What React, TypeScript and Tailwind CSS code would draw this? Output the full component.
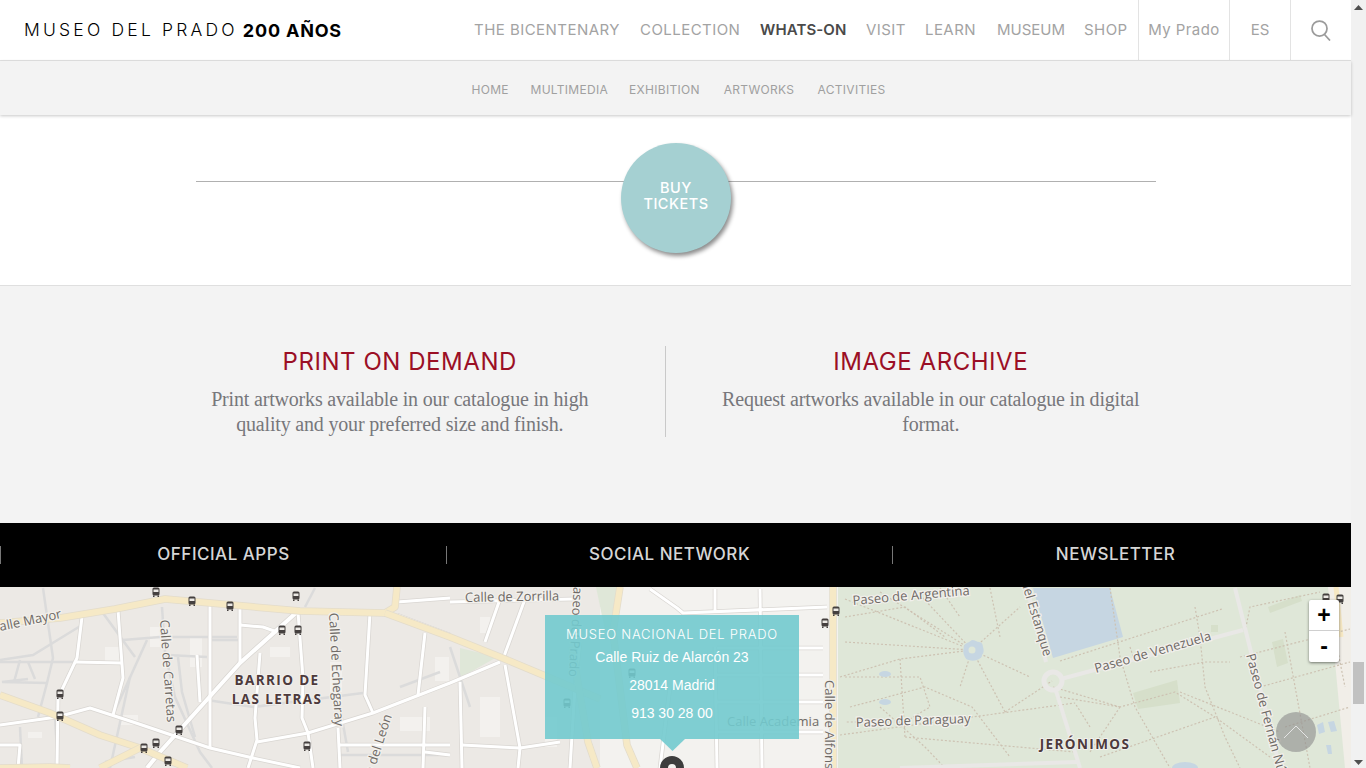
import React from "react";

const majors: number[][] = [
  [0,36,60,31,115,22,165,12,300,24,385,26,395,20,397,0],
  [385,26,450,50,500,70,543,88,600,112],
  [0,108,50,126,100,148,140,161,187,181],
  [140,161,100,181],
  [0,181,50,180,70,181],
  [620,0,613,45,627,158,637,181],
  [572,60,588,155,597,181],
  [833,0,833,181],
];
const whites: number[][] = [
  [82,30,77,71,58,111,57,181],[118,23,123,91,113,128],[75,75,122,76],
  [0,138,57,130,90,121,133,135,210,161,253,171,300,181],[210,15,210,161],[240,18,240,75],
  [240,38,263,40,277,45],[297,25,240,76,160,165,147,181],[298,25,303,91,302,131,308,146,313,181],
  [260,66,255,131,257,153,248,181],[257,155,308,146,373,126,450,96,500,75],[370,26,365,108,373,126],
  [425,46,418,108],[338,141,340,181],[397,28,450,48],[397,15,450,11],[340,158,450,158],[197,68,200,115],
  [450,15,573,12],[500,12,485,55],[525,12,503,72],[505,78,520,161,518,181],[460,95,462,181],[462,158,520,161,560,155],
  [650,2,677,21,683,26,827,20],[715,2,715,25],[760,2,762,181],[717,61,823,61],[717,88,823,88],[717,115,823,115],[717,145,823,145],
  [715,60,717,181],[0,158,20,158,18,181],[425,120,423,181],[425,165,450,168],[580,55,575,100,570,181],[670,100,660,181],
];
const grays: number[][] = [
  [43,1,53,71,47,96,38,130],[0,75,75,75],[28,92,2,95,47,96],[82,38,33,68,0,73],[123,53,160,50,237,50],
  [167,68,207,70],[210,53,240,53],[147,53,113,128],[207,113,253,120,363,106],[340,168,450,168],[162,20,165,65,175,110,200,165,212,181],
  [14,95,20,73],[35,92,28,75],[55,130,58,181],[105,175,135,170],[315,1,305,20],[450,60,470,120],[20,140,22,181],
  [178,70,182,105,195,150],[100,22,135,70],[130,90,110,181],[340,120,348,165],[400,100,440,85],
];
const dots: number[][] = [
  [845,12,972,63],[880,5,972,63],[845,55,972,63,1030,90],[840,90,900,72,972,63],[972,63,960,100],[972,63,1020,20],[920,8,972,63],
  [972,63,1005,125],[840,148,1075,116],[845,30,905,20,945,50],[850,120,925,100,972,120,1010,170],[900,72,905,150],[880,120,925,160,945,181],
  [1060,74,1222,22],[1060,110,1120,120,1175,105,1215,130],[1120,120,1090,165],[1053,100,1120,120],[1110,1,1120,70,1135,120,1170,181],
  [1195,20,1200,50,1205,100,1225,150,1240,181],[1150,85,1205,75,1230,75],[1240,70,1350,42],[1260,100,1350,75],[1285,45,1310,181],
  [1180,105,1280,145],[1100,170,1215,130,1270,170],[1090,140,1075,116],[1285,140,1350,120],[1330,25,1345,100],[905,150,1075,165],[1005,125,1052,94],
  [1245,45,1250,20,1320,5],[1130,60,1135,75],[845,90,920,90,930,120,905,135,845,135],[940,1,960,30],[990,1,1000,50],
];
const buses: number[][] = [
  [192,14],[230,19],[296,9],[282,43],[298,43],[60,107],[60,129],[179,143],[156,156],[144,161],[168,174],[307,159],
  [156,5],[836,24],[825,36],[632,86],[567,116],[1326,11],[1340,12],
];
const pts = (p: number[]) => p.map((v, i) => (i % 2 ? `${v} ` : `${v},`)).join("");

function MapLabel({ t, children, anchor }: { t: string; children: string; anchor?: "end" | "middle" }) {
  return (
    <text transform={t} textAnchor={anchor} fontFamily="'Open Sans',sans-serif" fontSize="13" fill="#6f6a66" stroke="#f2f0ec" strokeWidth="2.5" paintOrder="stroke">
      {children}
    </text>
  );
}
function District({ x, y, children }: { x: number; y: number; children: string }) {
  return (
    <text x={x} y={y} textAnchor="middle" fontFamily="'Open Sans',sans-serif" fontWeight="700" fontSize="13.5" letterSpacing="1.4" fill="#4d3a3c" stroke="#f2f0ec" strokeWidth="2" paintOrder="stroke">
      {children}
    </text>
  );
}

function MapDrawing() {
  return (
    <svg viewBox="0 0 1351 181" width="1351" height="181" className="block">
      <rect width="1351" height="181" fill="#ece9e5" />
      <path d="M600 0H838V181H600Z" fill="#f3f2ef" />
      <path d="M596 0H618L612 45L606 48Z" fill="#dfe7d8" />
      <path d="M460 61L497 70L460 91Z" fill="#dfe7d8" />
      {[[105,60,15,18],[150,40,20,20],[190,50,12,30],[270,60,20,10],[330,75,12,30],[435,70,14,24],[480,110,20,40],[545,130,12,30],[400,130,30,14],[28,145,14,6],[480,30,10,16],[120,128,18,10]].map((r, i) => (
        <rect key={i} x={r[0]} y={r[1]} width={r[2]} height={r[3]} fill="#f3f1ee" />
      ))}
      <path d="M838 0H1345L1351 181H838Z" fill="#dfe7d8" />
      <path d="M1328 0H1351V181H1345Z" fill="#f1eee8" />
      <polyline points="1336,0 1341,50" fill="none" stroke="#f6e8c3" strokeWidth="5" />
      <path d="M1033 1H1110L1123 50L1053 71Z" fill="#c6d6e2" />
      <path d="M1133 106L1177 93L1180 116L1138 122Z" fill="#d6dfca" />
      <path d="M1272 55L1283 52L1288 76L1277 80Z" fill="#d6dfca" />
      <path d="M1268 20L1300 8L1302 14L1270 26Z" fill="#d6dfca" />
      <rect x="1211" y="38" width="7" height="7" fill="#d6dfca" />
      {dots.map((p, i) => (
        <polyline key={i} points={pts(p)} fill="none" stroke="#cdc2b2" strokeWidth="1.2" strokeDasharray="2 2" />
      ))}
      {grays.map((p, i) => (
        <polyline key={i} points={pts(p)} fill="none" stroke="#dbdbdb" strokeWidth="2.5" />
      ))}
      {whites.map((p, i) => (
        <polyline key={`c${i}`} points={pts(p)} fill="none" stroke="#d9d6d2" strokeWidth={i === 7 ? 5.5 : 4.5} strokeLinejoin="round" />
      ))}
      {whites.map((p, i) => (
        <polyline key={i} points={pts(p)} fill="none" stroke="#ffffff" strokeWidth={i === 7 ? 4 : 3} strokeLinejoin="round" />
      ))}
      {majors.map((p, i) => (
        <g key={i}>
          <polyline points={pts(p)} fill="none" stroke="#e3dccb" strokeWidth="7.5" strokeLinejoin="round" />
          <polyline points={pts(p)} fill="none" stroke="#f6e9c6" strokeWidth="6" strokeLinejoin="round" />
        </g>
      ))}
      <g fill="none" stroke="#e9e8e6" strokeWidth="4">
        <polyline points="1027,1 1046,75" />
        <polyline points="1056,104 1080,181" />
        <polyline points="1061,92 1243,43" />
        <polyline points="1235,1 1280,181" />
        <polyline points="900,181 1077,175" />
        <circle cx="1053" cy="94" r="9" strokeWidth="5" />
      </g>
      <path d="M972 53c3 0 5 2 7 2 3 0 4 3 4 5 1 3 1 6-1 8 0 3-3 4-5 5-3 1-6 1-8 0-3 0-4-3-5-5-1-3-1-5 0-8 0-3 3-4 5-5z" fill="#c6d6e2" />
      <circle cx="972" cy="63" r="3.5" fill="#dfe7d8" />
      <ellipse cx="885" cy="87" rx="6" ry="3" fill="#c6d6e2" />
      <ellipse cx="885" cy="115" rx="6" ry="3" fill="#c6d6e2" />
      <path d="M1317 138l6-3 2 10-6 2zM1328 135l6-1 3 10-6 1zM1326 158h5l1 9h-4z" fill="#c6d6e2" />
      <ellipse cx="1185" cy="181" rx="13" ry="6" fill="#c6d6e2" />
      {buses.map((b, i) => (
        <g key={i} transform={`translate(${b[0] - 3.5} ${b[1] - 4.5})`}>
          <rect width="7" height="8" rx="1.5" fill="#45403f" />
          <rect x="1" y="2" width="5" height="2.5" fill="#ece9e5" />
          <rect x="0.5" y="8" width="1.5" height="1.5" fill="#45403f" />
          <rect x="5" y="8" width="1.5" height="1.5" fill="#45403f" />
        </g>
      ))}
      <MapLabel t="translate(62 31) rotate(-12)" anchor="end">Calle Mayor</MapLabel>
      <MapLabel t="translate(160 33) rotate(86)">Calle de Carretas</MapLabel>
      <MapLabel t="translate(329 26) rotate(87)">Calle de Echegaray</MapLabel>
      <MapLabel t="translate(392 129) rotate(-72)" anchor="end">Calle del León</MapLabel>
      <MapLabel t="translate(465 15) rotate(-1)">Calle de Zorrilla</MapLabel>
      <MapLabel t="translate(574 -8) rotate(93)">Paseo del Prado</MapLabel>
      <MapLabel t="translate(727 139)">Calle Academia</MapLabel>
      <MapLabel t="translate(825 93) rotate(90)">Calle de Alfonso XII</MapLabel>
      <MapLabel t="translate(853 18) rotate(-5)">Paseo de Argentina</MapLabel>
      <MapLabel t="translate(856 140) rotate(-2)">Paseo de Paraguay</MapLabel>
      <MapLabel t="translate(1044 70) rotate(73)" anchor="end">Calle del Estanque</MapLabel>
      <MapLabel t="translate(1096 86) rotate(-16)">Paseo de Venezuela</MapLabel>
      <MapLabel t="translate(1246 68) rotate(75)">Paseo de Fernán Núñez</MapLabel>
      <District x={277} y={98}>BARRIO DE</District>
      <District x={277} y={117}>LAS LETRAS</District>
      <District x={1085} y={162}>JERÓNIMOS</District>
    </svg>
  );
}

const nav = [
  ["THE BICENTENARY", "w-[146px]"],
  ["COLLECTION", "w-[100px]"],
  ["WHATS-ON", "w-[86px] font-semibold tracking-[0.1px] text-[#4a4a4a]"],
  ["VISIT", "w-[38px]"],
  ["LEARN", "w-[53px]"],
  ["MUSEUM", "w-[67px] tracking-[0px]"],
  ["SHOP", "w-[43px]"],
];
const sub = [
  ["HOME", "w-[37px]"],
  ["MULTIMEDIA", "w-[76px]"],
  ["EXHIBITION", "w-[72px]"],
  ["ARTWORKS", "w-[73px]"],
  ["ACTIVITIES", "w-[68px]"],
];

export default function App() {
  return (
    <div className="flex h-[768px] w-[1366px] overflow-hidden bg-white font-['Inter',sans-serif]">
      <main className="w-[1351px] shrink-0">
        <header className="flex h-[61px] items-stretch border-b border-[#e3e3e3] bg-white pl-6">
          <div className="flex w-[440px] items-center whitespace-nowrap text-black">
            <span className="text-[17.5px] font-light tracking-[3.2px]">MUSEO DEL PRADO</span>
            <span className="ml-[5px] text-[18px] font-bold tracking-[0.8px]">200 AÑOS</span>
          </div>
          <nav className="ml-[10px] flex w-[664px] items-center gap-[20px] text-[15px] tracking-[0.45px] text-[#a3a3a3]">
            {nav.map(([label, cls]) => (
              <span key={label} className={`whitespace-nowrap text-center ${cls}`}>{label}</span>
            ))}
          </nav>
          <div className="flex w-[91px] items-center justify-center border-l border-[#e3e3e3] text-[15px] tracking-[0.4px] text-[#a3a3a3]">My Prado</div>
          <div className="flex w-[61px] items-center justify-center border-l border-[#e3e3e3] text-[15px] text-[#a3a3a3]">ES</div>
          <div className="flex w-[61px] items-center justify-center border-l border-[#e3e3e3]">
            <svg width="20" height="21" viewBox="0 0 20 21" fill="none" stroke="#9b9b9b" strokeWidth="1.75">
              <circle cx="8.5" cy="8.5" r="7.5" />
              <path d="M13.5 14.5L19 20.5" />
            </svg>
          </div>
        </header>
        <div className="relative z-10 flex h-[54px] items-center justify-center gap-[22px] bg-[#f3f3f3] pl-[6px] pt-[3px] text-[12px] tracking-[0.3px] text-[#a0a0a0] shadow-[0_1px_3px_rgba(0,0,0,0.22)]">
          {sub.map(([label, cls]) => (
            <span key={label} className={`whitespace-nowrap text-center ${cls}`}>{label}</span>
          ))}
        </div>

        <section className="relative h-[171px] border-b border-[#dfdfdf] bg-white pt-[66px]">
          <div className="ml-[196px] h-px w-[960px] bg-[#b0b0b0]" />
          <a className="absolute left-[621px] top-[28px] flex h-[110px] w-[110px] items-center justify-center rounded-full bg-[#a5d0d2] pb-[4px] text-center text-[14.5px] font-medium leading-[16px] tracking-[0.5px] text-white shadow-[2px_3px_4px_rgba(0,0,0,0.45)]">
            BUY<br />TICKETS
          </a>
        </section>

        <section className="h-[237px] bg-[#f3f3f3] pl-[135px] pt-[60px]">
          <div className="grid w-[1061px] grid-cols-2">
            <div className="h-[91px] border-r border-[#c9c9c9] text-center">
              <h2 className="mt-[1px] text-[24px] font-normal leading-[30px] tracking-[0.55px] text-[#9b0f25]">PRINT ON DEMAND</h2>
              <p className="mt-[10px] font-['Liberation_Serif',serif] text-[20px] leading-[25px] tracking-[-0.18px] text-[#77777b]">
                Print artworks available in our catalogue in high<br />quality and your preferred size and finish.
              </p>
            </div>
            <div className="text-center">
              <h2 className="mt-[1px] text-[24px] font-normal leading-[30px] tracking-[0.55px] text-[#9b0f25]">IMAGE ARCHIVE</h2>
              <p className="mt-[10px] font-['Liberation_Serif',serif] text-[20px] leading-[25px] tracking-[-0.18px] text-[#77777b]">
                Request artworks available in our catalogue in digital<br />format.
              </p>
            </div>
          </div>
        </section>

        <section className="grid h-[64px] grid-cols-[446px_446px_459px] items-center bg-black text-[17px] font-medium tracking-[0.5px] text-[#d6d6d6]">
          {["OFFICIAL APPS", "SOCIAL NETWORK", "NEWSLETTER"].map((t, i) => (
            <div key={t} className={`flex h-[18px] items-center justify-center border-l border-[#777] ${i === 2 ? "pr-[13px]" : ""}`}>{t}</div>
          ))}
        </section>

        <section className="relative h-[181px] overflow-hidden">
          <MapDrawing />
          <div className="absolute left-[545px] top-[28px] h-[124px] w-[254px] bg-[#72cace]/90 pt-[10px] text-center text-white">
            <div className="text-[13px] font-light leading-[18px] tracking-[0.75px]">MUSEO NACIONAL DEL PRADO</div>
            <div className="font-['Liberation_Sans',sans-serif] text-[14px] leading-[28px]">
              Calle Ruiz de Alarcón 23<br />28014 Madrid<br />913 30 28 00
            </div>
          </div>
          <svg className="absolute left-[660px] top-[152px]" width="25" height="12" viewBox="0 0 25 12">
            <path d="M0 0H25L12.5 12Z" fill="#72cace" fillOpacity="0.9" />
          </svg>
          <svg className="absolute left-[660px] top-[169px]" width="24" height="24" viewBox="0 0 24 24">
            <circle cx="12" cy="12" r="8" fill="#f3f2ef" stroke="#3d3d3d" strokeWidth="8" />
          </svg>
          <div className="absolute left-[1309px] top-[13px] w-[30px] overflow-hidden rounded-[2px] bg-white font-['Liberation_Sans',sans-serif] text-[23px] font-bold leading-[30px] text-black shadow-[0_1px_3px_rgba(0,0,0,0.5)]">
            <div className="h-[31px] border-b border-[#cfcfcf] text-center">+</div>
            <div className="h-[31px] text-center">-</div>
          </div>
          <div className="absolute left-[1276px] top-[125px] flex h-[40px] w-[40px] items-center justify-center rounded-full bg-[#8c8c8c]/60">
            <svg width="26" height="14" viewBox="0 0 26 14" fill="none" stroke="#e4e4e4" strokeWidth="1">
              <path d="M1 13L13 1L25 13" />
            </svg>
          </div>
        </section>
      </main>

      <aside className="flex w-[15px] shrink-0 flex-col items-center bg-[#f1f1f1]">
        <svg className="mt-[5px]" width="9" height="5" viewBox="0 0 9 5"><path d="M4.5 0L9 5H0Z" fill="#505050" /></svg>
        <div className="ml-[-1px] mt-[652px] h-[42px] w-[11px] bg-[#c1c1c1]" />
        <svg className="mt-[56px]" width="9" height="5" viewBox="0 0 9 5"><path d="M0 0H9L4.5 5Z" fill="#505050" /></svg>
      </aside>
    </div>
  );
}
